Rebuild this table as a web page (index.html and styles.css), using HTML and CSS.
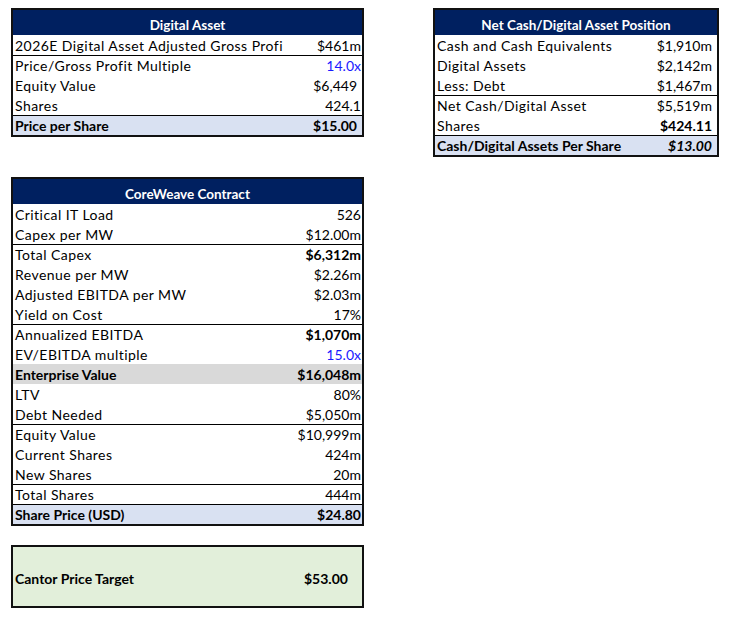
FILE: index.html
```html
<!DOCTYPE html>
<html>
<head>
<meta charset="utf-8">
<link rel="stylesheet" href="styles.css">
</head>
<body>
<div class="page">
  <div class="col-left">
    <div class="tbl">
      <div class="hdr">Digital Asset</div>
      <div class="row"><span class="lbl">2026E Digital Asset Adjusted Gross Profi</span><span class="val">$461m</span></div>
      <div class="row sep"><span class="lbl">Price/Gross Profit Multiple</span><span class="val blue">14.0x</span></div>
      <div class="row"><span class="lbl">Equity Value</span><span class="val pad">$6,449</span></div>
      <div class="row"><span class="lbl">Shares</span><span class="val">424.1</span></div>
      <div class="row sep total"><span class="lbl b">Price per Share</span><span class="val b pad">$15.00</span></div>
    </div>

    <div class="tbl t3">
      <div class="hdr">CoreWeave Contract</div>
      <div class="row"><span class="lbl">Critical IT Load</span><span class="val">526</span></div>
      <div class="row"><span class="lbl">Capex per MW</span><span class="val">$12.00m</span></div>
      <div class="row sep"><span class="lbl">Total Capex</span><span class="val b">$6,312m</span></div>
      <div class="row"><span class="lbl">Revenue per MW</span><span class="val">$2.26m</span></div>
      <div class="row"><span class="lbl">Adjusted EBITDA per MW</span><span class="val">$2.03m</span></div>
      <div class="row"><span class="lbl">Yield on Cost</span><span class="val">17%</span></div>
      <div class="row sep"><span class="lbl">Annualized EBITDA</span><span class="val b">$1,070m</span></div>
      <div class="row"><span class="lbl">EV/EBITDA multiple</span><span class="val blue">15.0x</span></div>
      <div class="row grey"><span class="lbl b">Enterprise Value</span><span class="val b">$16,048m</span></div>
      <div class="row"><span class="lbl">LTV</span><span class="val">80%</span></div>
      <div class="row"><span class="lbl">Debt Needed</span><span class="val">$5,050m</span></div>
      <div class="row sep"><span class="lbl">Equity Value</span><span class="val">$10,999m</span></div>
      <div class="row"><span class="lbl">Current Shares</span><span class="val">424m</span></div>
      <div class="row"><span class="lbl">New Shares</span><span class="val">20m</span></div>
      <div class="row sep"><span class="lbl">Total Shares</span><span class="val">444m</span></div>
      <div class="row sep total"><span class="lbl b">Share Price (USD)</span><span class="val b">$24.80</span></div>
    </div>

    <div class="target">
      <span class="tlbl">Cantor Price Target</span>
      <span class="tval">$53.00</span>
    </div>
  </div>

  <div class="col-right">
    <div class="tbl t2">
      <div class="hdr">Net Cash/Digital Asset Position</div>
      <div class="row"><span class="lbl">Cash and Cash Equivalents</span><span class="val pad">$1,910m</span></div>
      <div class="row"><span class="lbl">Digital Assets</span><span class="val pad">$2,142m</span></div>
      <div class="row"><span class="lbl">Less: Debt</span><span class="val pad">$1,467m</span></div>
      <div class="row sep"><span class="lbl">Net Cash/Digital Asset</span><span class="val pad">$5,519m</span></div>
      <div class="row"><span class="lbl">Shares</span><span class="val b pad">$424.11</span></div>
      <div class="row sep total"><span class="lbl b">Cash/Digital Assets Per Share</span><span class="val b i pad">$13.00</span></div>
    </div>
  </div>
</div>
</body>
</html>
```

FILE: styles.css
```css
html, body {
  margin: 0;
  padding: 0;
  background: #ffffff;
}
body {
  font-family: "Lato", "Liberation Sans", sans-serif;
  font-size: 14px;
  color: #000000;
}
.page {
  display: flex;
  align-items: flex-start;
  padding: 8px 0 0 11px;
  gap: 69px;
}
.col-left {
  display: flex;
  flex-direction: column;
  width: 353px;
}
.col-right {
  width: 286px;
}
.tbl {
  border: 2px solid #111111;
  background: #ffffff;
}
.t3 {
  margin-top: 40px;
}
.hdr {
  height: 25px;
  box-sizing: border-box;
  background: #002060;
  color: #ffffff;
  font-weight: 700;
  font-size: 13.5px;
  display: flex;
  align-items: flex-end;
  justify-content: center;
  padding-bottom: 2px;
}
.row {
  height: 20px;
  box-sizing: border-box;
  display: flex;
  justify-content: space-between;
  align-items: flex-end;
  padding: 0 1px 0 2px;
  line-height: 18px;
  white-space: nowrap;
}
.row.sep {
  border-top: 1px solid #000000;
}
.lbl {
  letter-spacing: 0.45px;
}
.lbl.b {
  letter-spacing: 0;
}
.b {
  font-weight: 700;
}
.i {
  font-style: italic;
}
.blue {
  color: #1a1aff;
}
.pad {
  padding-right: 4px;
}
.total {
  background: #d9e1f2;
}
.grey {
  background: #d9d9d9;
}
.target {
  margin-top: 19px;
  height: 63px;
  box-sizing: border-box;
  border: 2px solid #111111;
  background: #e2efda;
  display: flex;
  align-items: center;
  padding: 3px 0 0 2px;
  font-weight: 700;
}
.tlbl {
  width: 289px;
}
.tval {
  width: 42px;
}
```
